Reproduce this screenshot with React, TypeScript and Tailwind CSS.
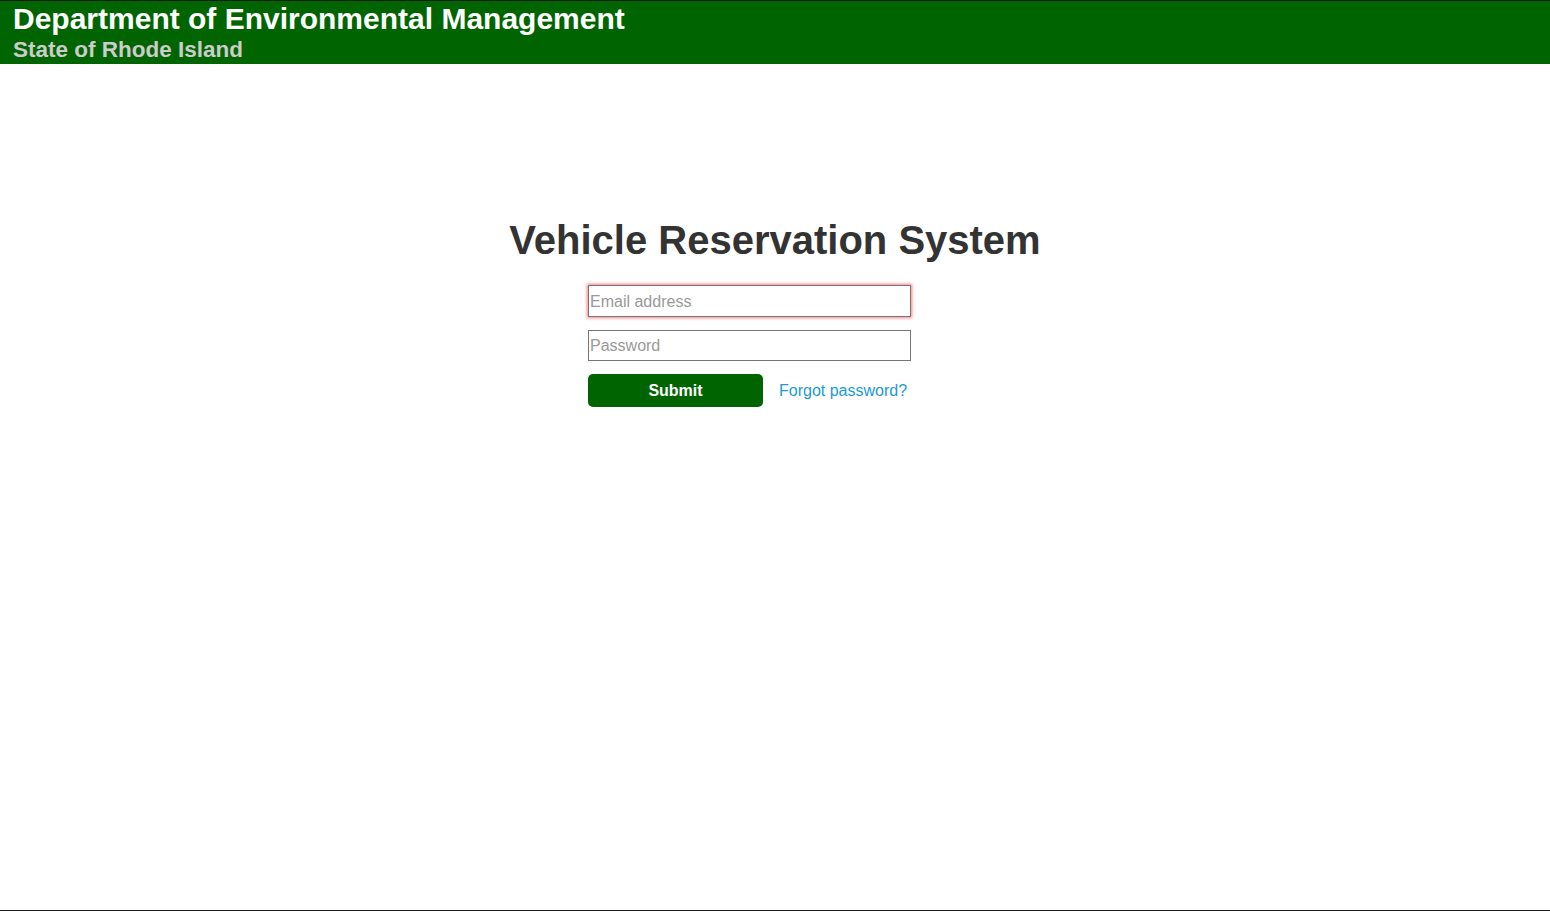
export default function App() {
  return (
    <div
      className="h-[911px] bg-white border-t border-b border-[#1a1a1a] flex flex-col"
      style={{ fontFamily: '"Liberation Sans", Arial, sans-serif' }}
    >
      <header className="bg-[#006400] h-[63px] px-[13px] pt-[1px]">
        <div className="text-white font-bold text-[30px] leading-[34px]">Department of Environmental Management</div>
        <div className="text-[#cccccc] font-bold text-[22.5px] leading-[24px] mt-[2px]">State of Rhode Island</div>
      </header>

      <main className="flex flex-col items-center pt-[152px]">
        <h1 className="text-[#333333] font-bold text-[40px] leading-[48px]">Vehicle Reservation System</h1>
        <form className="w-[323px] mt-[21px] ml-[-51px] flex flex-col" onSubmit={(e) => e.preventDefault()}>
          <input
            type="email"
            placeholder="Email address"
            className="h-[32px] px-[1px] pt-[1px] border border-[#767676] text-[16px] placeholder:text-[#999999] outline-none shadow-[0_0_3px_1px_rgba(255,80,80,0.75)]"
          />
          <input
            type="password"
            placeholder="Password"
            className="h-[31px] mt-[13px] px-[1px] border border-[#767676] text-[16px] placeholder:text-[#999999] outline-none"
          />
          <div className="flex items-center mt-[13px]">
            <button
              type="submit"
              className="w-[175px] h-[33px] rounded-[5px] bg-[#006400] text-white font-bold text-[16px]"
            >
              Submit
            </button>
            <a href="#" className="ml-[16px] text-[16px] text-[#1b9ad6]">Forgot password?</a>
          </div>
        </form>
      </main>
    </div>
  );
}
